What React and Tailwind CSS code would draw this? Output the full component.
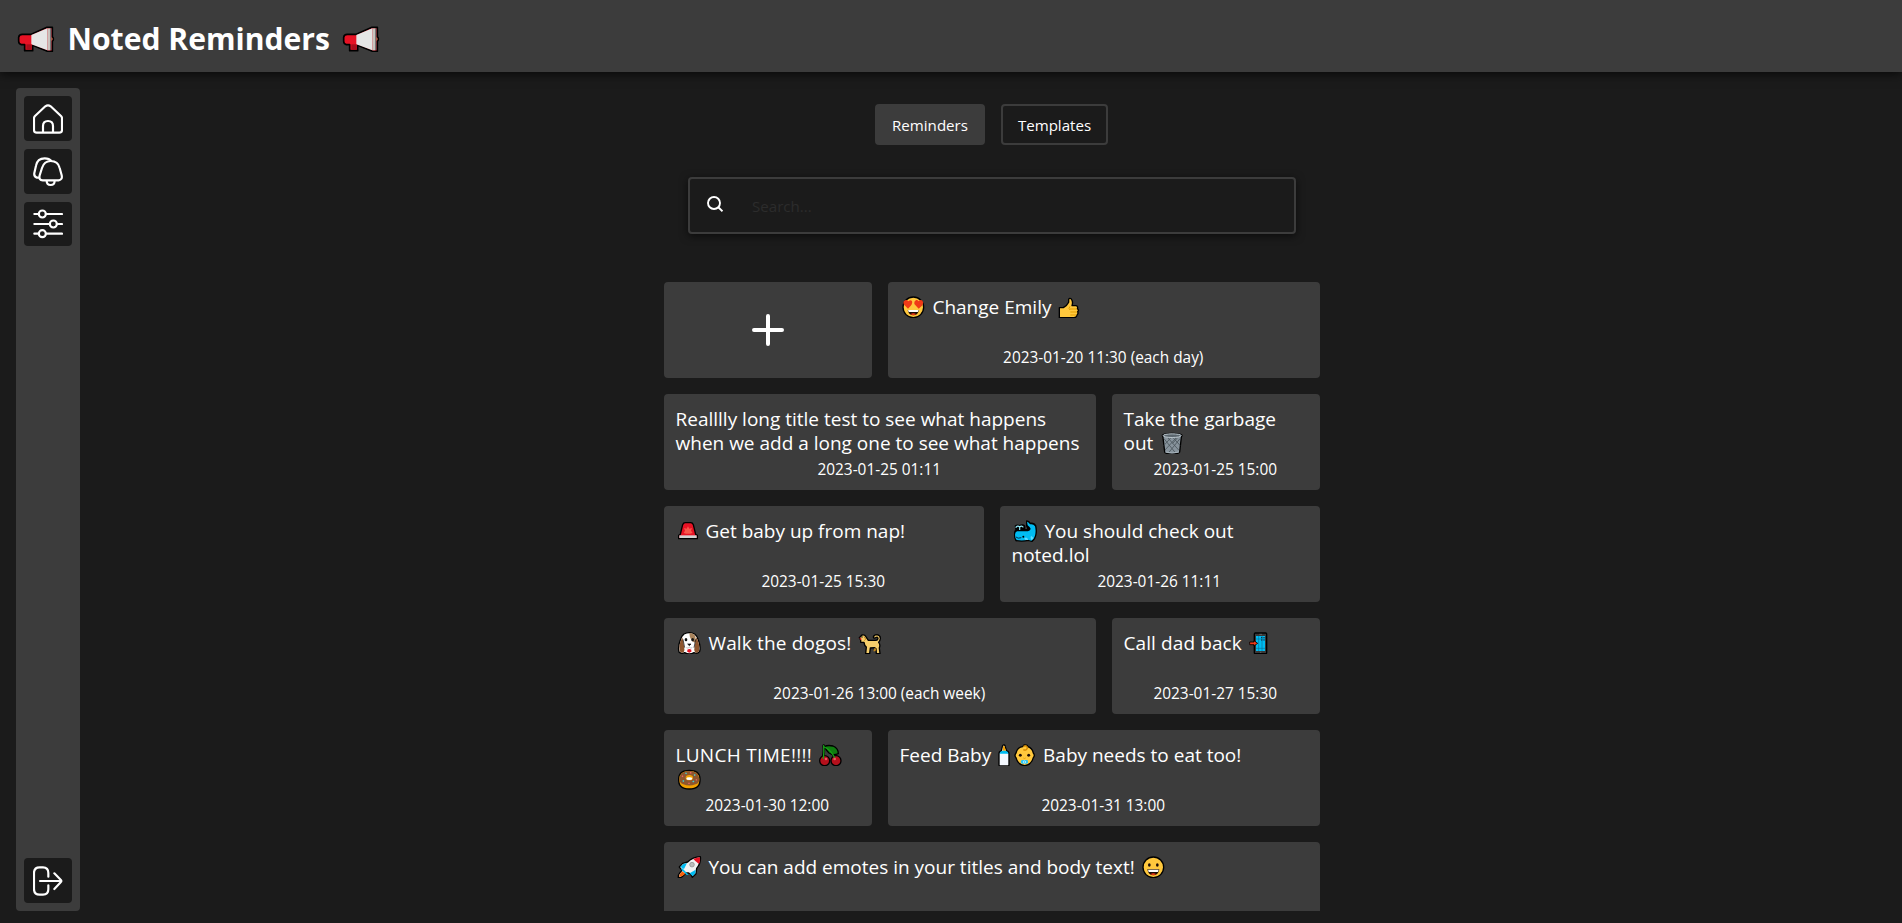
const glyphs = {
  heartEyes: (
    <>
      <circle cx="40" cy="34" r="31" fill="#ffc83d" stroke="#000" strokeWidth="4" />
      <path d="M24 38 L11 25 Q8 15 17 12 Q22 11 25 16 Q31 10 36 15 Q40 24 24 38Z" fill="#f03a17" />
      <path d="M56 38 L43 24 Q41 16 48 12 Q53 11 56 16 Q60 10 66 13 Q73 20 66 29Z" fill="#f03a17" />
      <path d="M23 42 H57 Q54 58 40 58 Q26 58 23 42Z" fill="#1c0c06" />
      <path d="M24 42 H56 L54 48 H26Z" fill="#fff" />
      <path d="M31 55 Q40 48 49 55 Q40 60 31 55Z" fill="#f03a17" />
    </>
  ),
  thumb: (
    <>
      <path d="M10 35 H22 Q34 28 38 19 V10 Q41 5 46 9 Q52 18 48 29 H60 Q67 31 64 38 Q70 42 65 47 Q68 53 63 57 Q62 65 54 65 H10Z" fill="#ffc83d" stroke="#000" strokeWidth="4" strokeLinejoin="round" />
      <path d="M42 39 H62 M43 48 H63 M43 57 H61 M42 31 Q36 38 42 42" fill="none" stroke="#e19d00" strokeWidth="3" />
    </>
  ),
  trash: (
    <>
      <path d="M13 10 Q14 4 42 4 Q72 4 72 10 L70 16 L65 60 Q62 66 42 66 Q22 66 20 60 L15 16Z" fill="#87939c" stroke="#000" strokeWidth="4" strokeLinejoin="round" />
      <path d="M18 20 L52 62 M30 18 L62 54 M46 18 L66 40 M66 20 L32 62 M54 18 L21 54 M38 18 L18 40 M58 18 L44 34" fill="none" stroke="#4b555c" strokeWidth="2.5" />
      <ellipse cx="42.500" cy="11" rx="27" ry="5.500" fill="#5b666e" stroke="#b9c4cb" strokeWidth="3" />
      <path d="M22 60 Q42 66 63 60" fill="none" stroke="#a8b5bd" strokeWidth="3" />
    </>
  ),
  siren: (
    <>
      <path d="M8 46 L13 43 L20 14 Q22 8 28 8 H44 Q50 8 52 14 L59 43 L64 46 V56 H8Z" fill="#e81224" stroke="#000" strokeWidth="4" strokeLinejoin="round" />
      <path d="M36 19 L40 26 L48 24 L45 32 L50 39 L42 41 H30 L23 39 L27 32 L24 24 L32 26Z" fill="#f7564a" />
      <path d="M10 46 H62 V54 H10Z" fill="#d2d2d2" />
    </>
  ),
  dogFace: (
    <>
      <path d="M24 6 Q40 -2 56 6 Q64 12 67 24 Q75 44 71 58 Q64 67 54 62 Q40 70 26 62 Q16 67 9 60 Q5 44 13 24 Q16 12 24 6Z" fill="#fff" stroke="#000" strokeWidth="4" />
      <path d="M40 3 Q53 3 58 12 L60 30 Q52 34 46 24 Q40 14 40 3Z" fill="#a8835c" />
      <path d="M19 16 Q22 30 24 42 Q27 55 23 61 Q15 64 11 57 Q8 42 13 29Z M61 16 Q58 30 56 42 Q53 55 57 61 Q65 64 69 57 Q72 42 67 29Z" fill="#8e562e" />
      <path d="M21 22 L26 47 M59 22 L54 47" stroke="#000" strokeWidth="2" />
      <ellipse cx="30" cy="23" rx="4" ry="5" fill="#111" />
      <ellipse cx="50" cy="23" rx="4" ry="5" fill="#111" />
      <path d="M35 36 H45 L40 41Z" fill="#111" stroke="#111" strokeWidth="2" />
      <path d="M31 47 Q36 50 40 46 Q44 50 49 47" fill="none" stroke="#888" strokeWidth="1.5" />
      <path d="M34 53 Q40 49 46 53 V58 Q40 66 34 58Z" fill="#e81224" />
    </>
  ),
  dog: (
    <>
      <path d="M10 17 L18 9 Q26 7 29 13 L37 25 L55 25 Q64 26 66 20 Q66 13 59 17 Q53 20 52 15 Q54 8 63 8 Q74 10 73 20 Q72 27 68 31 Q74 38 70 48 L72 65 H61 L60 50 L56 47 L43 48 L41 65 H29 L31 45 Q25 41 24 31 L14 31 V24Z" fill="#f7cf6b" stroke="#000" strokeWidth="4" strokeLinejoin="round" />
      <path d="M56 47 L52 58 H58 L61 51Z" fill="#c58a1c" />
      <path d="M10 17 L17 20 L14 25Z" fill="#e81224" />
      <path d="M24 14 L29 21 L25 26" fill="none" stroke="#c58a1c" strokeWidth="3" />
      <circle cx="18" cy="15" r="2" fill="#000" />
    </>
  ),
  whale: (
    <>
      <path d="M10 18 Q16 13 23 17 Q32 12 38 18 V29 H46 Q49 26 44 18 V3 Q51 4 55 10 Q66 7 71 17 Q74 30 72 42 Q70 57 60 64 L50 61 Q32 65 12 62 Q7 54 8 42 Q7 34 12 29Z" fill="#000" stroke="#000" strokeWidth="4" strokeLinejoin="round" />
      <path d="M9 44 Q9 37 15 34 H42 Q54 34 56 26 Q54 21 47 16 L45 5 Q51 7 54 13 Q64 11 69 19 Q72 30 70 42 Q68 56 58 62 L48 59 Q32 63 14 60 Q9 54 9 44Z" fill="#00bcf2" />
      <path d="M11 23 Q17 15 23 21 V30 M23 21 Q29 15 34 22" fill="none" stroke="#8fe6f5" strokeWidth="3.5" />
      <path d="M12 51 Q17 57 28 53" fill="none" stroke="#00334d" strokeWidth="3" />
      <circle cx="34" cy="50" r="3" fill="#000" />
      <path d="M37 54 Q46 49 49 60 L39 59Z M57 47 Q53 55 59 61 L65 54Z" fill="#5bdcff" />
    </>
  ),
  phone: (
    <>
      <rect x="22" y="3" width="37" height="62" rx="3" fill="#383838" stroke="#000" strokeWidth="4" />
      <rect x="27" y="12" width="27" height="45" fill="#00bcf2" />
      <path d="M35 12 V57 M45 12 V57 M27 21 H54 M27 49 H54" stroke="#087398" strokeWidth="2" />
      <path d="M42 17 H54 M42 24 H54" stroke="#123" strokeWidth="3" strokeDasharray="3 2" />
      <path d="M8 30 H21 V26 L32 34 L21 42 V38 H8Z" fill="#f03a17" stroke="#000" strokeWidth="2.5" />
      <path d="M37 7 H45 M39 61 H43" stroke="#777" strokeWidth="2" />
    </>
  ),
  cherries: (
    <>
      <path d="M20 5 Q22 26 18 38 M21 8 Q42 18 52 38" fill="none" stroke="#000" strokeWidth="8" strokeLinecap="round" />
      <path d="M22 8 Q32 2 48 6 Q64 12 64 29 Q48 36 36 27 Q30 22 22 8Z" fill="#107c10" stroke="#000" strokeWidth="4" strokeLinejoin="round" />
      <circle cx="23" cy="50" r="15" fill="#b5101c" stroke="#000" strokeWidth="4" />
      <circle cx="57" cy="50" r="15" fill="#b5101c" stroke="#000" strokeWidth="4" />
      <path d="M20 5 Q22 26 19 43 M22 9 Q42 18 53 41" fill="none" stroke="#16a016" strokeWidth="4" strokeLinecap="round" />
      <circle cx="27" cy="45" r="4" fill="#ef5360" />
      <circle cx="53" cy="45" r="4" fill="#ef5360" />
    </>
  ),
  donut: (
    <>
      <path d="M8 33 Q8 7 40 7 Q72 7 72 33 Q74 63 40 63 Q6 63 8 33Z" fill="#f2a100" stroke="#000" strokeWidth="4" />
      <path d="M10 32 Q12 9 40 9 Q68 9 70 32 Q70 46 58 49 Q40 56 22 49 Q10 45 10 32Z" fill="#8e562e" />
      <ellipse cx="40" cy="29" rx="11" ry="8" fill="#f2a100" />
      <ellipse cx="40" cy="32" rx="9" ry="4" fill="#fff" />
      <path d="M28 15 l4 2 M54 22 l4 -2 M20 38 l4 2 M50 42 l4 -3" stroke="#3fd1d8" strokeWidth="4" />
      <path d="M42 14 l4 1 M18 26 l3 -3 M37 46 l4 0 M60 34 l2 3" stroke="#f0616d" strokeWidth="4" />
    </>
  ),
  bottle: (
    <>
      <path d="M9 30 Q9 22 16 21 L19 8 Q20 2 25 3 Q28 4 28 10 L32 21 Q39 23 39 30 V62 Q39 66 35 66 H13 Q9 66 9 62Z" fill="#f4f8ff" stroke="#000" strokeWidth="4" strokeLinejoin="round" />
      <path d="M20 20 L21 8 Q24 3 26 8 L30 20Z" fill="#f2a100" />
      <path d="M11 29 Q11 20 24 20 Q37 20 37 29Z" fill="#00bcf2" />
    </>
  ),
  baby: (
    <>
      <path d="M36 3 Q46 1 48 8 Q61 13 64 27 Q70 34 64 41 Q58 63 38 65 Q18 63 12 41 Q6 35 12 27 Q16 10 32 8Z" fill="#ffc83d" stroke="#000" strokeWidth="4" />
      <path d="M34 7 Q46 3 46 13 Q43 21 34 17" fill="none" stroke="#d68a00" strokeWidth="4" />
      <circle cx="25" cy="34" r="4.500" fill="#1c0c06" />
      <circle cx="50" cy="34" r="4.500" fill="#1c0c06" />
      <rect x="27" y="48" width="21" height="11" rx="4" fill="#27c5f7" />
      <circle cx="37.500" cy="54" r="3.500" fill="none" stroke="#eaffff" strokeWidth="2" />
      <path d="M34 42 Q37 45 41 42" fill="none" stroke="#e19d00" strokeWidth="2.500" />
    </>
  ),
  rocket: (
    <>
      <path d="M73 2 Q76 20 62 37 L60 53 L49 64 L44 54 L38 51 L30 51 L20 61 Q14 66 7 65 Q6 57 12 50 L18 43 L10 33 L20 22 L35 18 Q50 3 73 2Z" fill="#f2f2f2" stroke="#000" strokeWidth="4" strokeLinejoin="round" />
      <path d="M72 4 Q74 14 69 24 Q58 16 52 9 Q62 4 72 4Z" fill="#e81224" />
      <path d="M13 33 L22 24 L33 21 L24 39Z M41 52 L59 41 L58 52 L50 61Z M18 36 L38 56 L32 57 L16 41Z" fill="#00bcf2" />
      <path d="M9 63 Q10 53 19 46 L28 53 Q20 62 9 63Z" fill="#f7630c" />
      <circle cx="48" cy="26" r="7" fill="#bdbdbd" stroke="#8a8a8a" strokeWidth="2" />
    </>
  ),
  grin: (
    <>
      <circle cx="40" cy="34" r="31" fill="#ffc83d" stroke="#000" strokeWidth="4" />
      <ellipse cx="28" cy="27" rx="4" ry="5.500" fill="#1c0c06" />
      <ellipse cx="52" cy="27" rx="4" ry="5.500" fill="#1c0c06" />
      <path d="M22 40 H58 Q55 58 40 58 Q25 58 22 40Z" fill="#1c0c06" />
      <path d="M24 41 H56 L54 48 H26Z" fill="#fff" />
      <path d="M31 55 Q40 48 49 55 Q40 60 31 55Z" fill="#f03a17" />
    </>
  ),
};

function Emoji({ name, width = "w-[28px]" }) {
  return (
    <svg className={`inline-block h-[22.67px] align-[-4.33px] ${width}`} viewBox="0 0 84 68" preserveAspectRatio="xMinYMin slice" aria-hidden="true">
      {glyphs[name]}
    </svg>
  );
}

function Megaphone({ className }) {
  return (
    <svg className={`h-[26px] w-[38px] ${className}`} viewBox="51 76 114 78" aria-hidden="true">
      <path d="M56 110 Q57 101 67 101 H94 L141 80 H157 V108 Q163 115 157 122 V152 H143 L98 134 V150 H74 V132 H64 Q56 130 56 122Z" fill="#e81224" stroke="#000" strokeWidth="5" strokeLinejoin="round" />
      <path d="M94 103 L142 83 V149 L94 131Z" fill="#e6e6e6" />
      <path d="M142 83 H150 V149 H142Z" fill="#c9c3be" />
      <path d="M150 83 H154 V149 H150Z" fill="#787878" />
      <path d="M155 110 Q160 115 155 120Z" fill="#c19a6b" stroke="#8a6a45" />
      <path d="M79 131 H95 V147 H79Z" fill="#a80d1b" />
    </svg>
  );
}

function SideButton({ label, viewBox, children }) {
  return (
    <button aria-label={label} className="flex h-[44.8px] w-12 shrink-0 items-center justify-center rounded bg-[#1b1b1b] pt-px">
      <svg className="size-[30px]" viewBox={viewBox} fill="none" stroke="#fff" strokeWidth="6.5" strokeLinecap="round" strokeLinejoin="round">
        {children}
      </svg>
    </button>
  );
}

function Card({ span, date, children }) {
  return (
    <article className={`flex h-24 flex-col rounded bg-[#3c3c3c] pt-[13px] pr-[13px] pl-[11.5px] ${span}`}>
      <h2 className="h-12 text-[19px] leading-6">{children}</h2>
      {date && <time className="text-center text-[15.4px] leading-[29px] whitespace-nowrap">{date}</time>}
    </article>
  );
}

export default function App() {
  return (
    <div className="flex h-[923px] flex-col overflow-hidden bg-[#1b1b1b] font-['Open_Sans',sans-serif] text-white">
      <header className="z-10 flex h-[72px] shrink-0 items-center bg-[#3c3c3c] pt-[5px] pl-[17px] shadow-[0_2px_10px_rgba(0,0,0,0.7)]">
        <Megaphone className="" />
        <h1 className="ml-[12.5px] text-[30.1px] leading-10 font-bold">Noted Reminders</h1>
        <Megaphone className="ml-[12.5px]" />
      </header>

      <div className="flex min-h-0 flex-1 px-4 pt-4 pb-3">
        <nav className="flex w-16 shrink-0 flex-col items-center gap-2 rounded bg-[#3c3c3c] py-2">
          <SideButton label="Home" viewBox="99 311 90 90">
            <path d="M102 354 Q102 350 105 347 L136 318 Q144 312 152 318 L183 347 Q186 350 186 354 V389 Q186 397 178 397 H110 Q102 397 102 389Z M129 397 V377 Q129 362 144 362 Q159 362 159 377 V397" />
          </SideButton>
          <SideButton label="Reminders" viewBox="99 470 90 90">
            <path d="M152 482 C138 482 130 490 126 503 L119 525 Q116 540 128 540 H176 Q188 538 185 525 L179 503 C176 490 167 482 152 482Z M117 532 H111 Q101 528 103 518 L108 496 C111 480 122 474 134 474 C143 474 150 477 154 482 M140 541 Q140 554 152 554 Q164 554 164 541" />
          </SideButton>
          <SideButton label="Settings" viewBox="99 628 90 90">
            <path d="M103 643 H116 M138 643 H186 M103 673 H149 M171 673 H186 M103 702 H116 M138 702 H186" />
            <circle cx="127" cy="643" r="10.500" />
            <circle cx="160" cy="673" r="10.500" />
            <circle cx="127" cy="702" r="10.500" />
          </SideButton>
          <div className="flex-1" />
          <SideButton label="Log out" viewBox="99 136 90 90">
            <path d="M145 168 V157 Q145 140 129 140 H119 Q102 140 102 157 V205 Q102 222 119 222 H129 Q145 222 145 206 V194 M120 181 H184 M163 158 L182 177 Q186 181 182 185 L163 205" />
          </SideButton>
        </nav>

        <main className="flex min-w-0 flex-1 flex-col items-center overflow-hidden pt-4 pl-[18px]">
          <div className="mr-px flex h-[41px] shrink-0 gap-4 text-[15.1px]">
            <button className="w-[110px] rounded bg-[#3c3c3c] pt-0.5">Reminders</button>
            <button className="w-[107px] rounded border-2 border-[#3c3c3c] pt-0.5">Templates</button>
          </div>

          <label className="mt-8 flex h-[57px] w-[608px] shrink-0 items-center rounded border-2 border-[#3c3c3c] pl-[17px] shadow-[0_2px_8px_rgba(0,0,0,0.6)]">
            <svg className="mb-[3px] size-4" viewBox="0 0 16 16" fill="none" stroke="#fff" strokeWidth="1.9">
              <circle cx="7" cy="7" r="6" />
              <path d="M11.300 11.300 L15.500 15.300" />
            </svg>
            <input className="ml-[29px] flex-1 bg-transparent pt-0.5 text-[15.1px] outline-none placeholder:text-[#2c2c2c]" placeholder="Search..." />
          </label>

          <section className="mt-12 grid min-h-0 w-[656px] flex-1 auto-rows-[96px] grid-cols-6 gap-4 overflow-hidden">
            <button aria-label="Add reminder" className="col-span-2 flex items-center justify-center rounded bg-[#3c3c3c]">
              <svg className="size-8" viewBox="0 0 32 32" fill="none" stroke="#fff" strokeWidth="4" strokeLinecap="round">
                <path d="M16 2 V30 M2 16 H30" />
              </svg>
            </button>
            <Card span="col-span-4" date="2023-01-20 11:30 (each day)">
              <Emoji name="heartEyes" /> Change Emily <Emoji name="thumb" />
            </Card>
            <Card span="col-span-4" date="2023-01-25 01:11">
              Realllly long title test to see what happens when we add a long one to see what happens
            </Card>
            <Card span="col-span-2" date="2023-01-25 15:00">
              Take the garbage out <Emoji name="trash" />
            </Card>
            <Card span="col-span-3" date="2023-01-25 15:30">
              <Emoji name="siren" width="w-[25px]" /> Get baby up from nap!
            </Card>
            <Card span="col-span-3" date="2023-01-26 11:11">
              <Emoji name="whale" /> You should check out noted.lol
            </Card>
            <Card span="col-span-4" date="2023-01-26 13:00 (each week)">
              <Emoji name="dogFace" /> <span className="tracking-[0.15px]">Walk the dogos!</span> <Emoji name="dog" />
            </Card>
            <Card span="col-span-2" date="2023-01-27 15:30">
              <span className="tracking-[0.1px]">Call dad back</span> <Emoji name="phone" />
            </Card>
            <Card span="col-span-2" date="2023-01-30 12:00">
              <span className="tracking-[0.3px]">LUNCH TIME!!!!</span> <Emoji name="cherries" /> <Emoji name="donut" />
            </Card>
            <Card span="col-span-4" date="2023-01-31 13:00">
              Feed Baby <Emoji name="bottle" width="w-[16px]" />
              <Emoji name="baby" width="w-[26px]" /> Baby needs to eat too!
            </Card>
            <Card span="col-span-6">
              <Emoji name="rocket" /> You can add emotes in your titles and body text! <Emoji name="grin" />
            </Card>
          </section>
        </main>
      </div>
    </div>
  );
}
